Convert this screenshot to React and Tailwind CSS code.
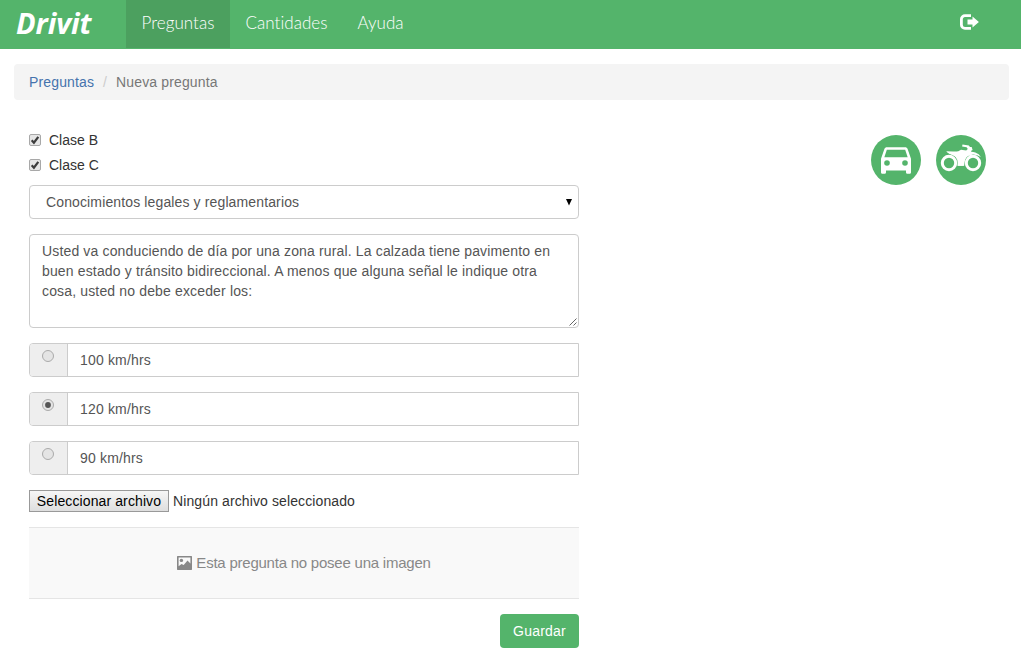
const arial = "font-['Liberation_Sans',Arial,sans-serif]";

function LogoutIcon() {
  return (
    <svg className="block h-[18px] w-5" viewBox="0 0 20 18" fill="none" aria-label="Salir">
      <path d="M12 2.600H6a3.600 3.600 0 0 0-3.600 3.600v5.600a3.600 3.600 0 0 0 3.600 3.600h6" stroke="#fff" strokeWidth="2.800" />
      <path d="M8.500 6.500h5V3.400L19.900 9l-6.400 5.600v-3.100h-5z" fill="#fff" />
    </svg>
  );
}

function CarIcon() {
  return (
    <svg className="size-[50px]" viewBox="0 0 50 50">
      <circle cx="25" cy="25" r="25" fill="#54b46b" />
      <path
        transform="translate(5 3.800) scale(1.667)"
        fill="#fff"
        d="M18.92 6.01C18.72 5.42 18.16 5 17.5 5h-11c-.66 0-1.21.42-1.42 1.01L3 12v8c0 .55.45 1 1 1h1c.55 0 1-.45 1-1v-1h12v1c0 .55.45 1 1 1h1c.55 0 1-.45 1-1v-8l-2.08-5.99zM5 11l1.500-4.500h11L19 11H5z"
        fillRule="evenodd"
      />
      <circle cx="16" cy="28" r="2.800" fill="#54b46b" />
      <circle cx="34" cy="28" r="2.800" fill="#54b46b" />
    </svg>
  );
}

function MotorcycleIcon() {
  return (
    <svg className="size-[50px]" viewBox="0 0 50 50">
      <circle cx="25" cy="25" r="25" fill="#54b46b" />
      <path
        d="M10.300 16.600 20.500 17.200l4.500-2.400 5.200.8 1.600-1.700-1.200-1.700-4.500-.7.400-2 6.300 1 1.200 1.600 1.700-.2.900 3.200-1.700.9 1.700 3.500L30 26l-1.800 4.800h-7l-1.500-8.300-5.200-3z"
        fill="#fff"
      />
      <g fill="#54b46b">
        <circle cx="13" cy="28" r="8.800" />
        <circle cx="37" cy="28" r="8.800" />
      </g>
      <path d="M10.300 16.600h12v5l-2.500.3c-1.500-2-4-3.200-6.800-3.300z" fill="#fff" />
      <path d="M20.500 19.500 31 17.500l-2.500 9.500-.8 3.800H22l-.3-5.800z" fill="#fff" />
      <path d="M32.500 15.500 37 26" stroke="#fff" strokeWidth="2" />
      <path d="M29 18q5.500-2 10.300-.6 3.900 1.300 5.600 4.700-4-2.800-8-2.600-5.300.2-8.400 5.100z" fill="#fff" />
      <g fill="#54b46b" stroke="#fff" strokeWidth="3">
        <circle cx="13" cy="28" r="6.700" />
        <circle cx="37" cy="28" r="6.700" />
      </g>
    </svg>
  );
}

function PictureIcon() {
  return (
    <svg className="mb-px h-[14px] w-[15px]" viewBox="0 0 15 14">
      <path
        fill="#888"
        fillRule="evenodd"
        d="M.5 0h14l.5.500v13l-.5.500H.5L0 13.500V.5zM1.600 1.600v8.600L4.500 7.900l2.200 1.200 3.800-4.600 2.900 3V1.600z"
      />
      <circle cx="4.400" cy="4.400" r="1.700" fill="#888" />
    </svg>
  );
}

function Checkbox({ label }) {
  return (
    <label className="flex h-5 items-center">
      <svg className="mr-2 size-3" viewBox="0 0 12 12">
        <rect x=".5" y=".5" width="11" height="11" rx="1.500" fill="#e6e6e6" stroke="#a8a8a8" />
        <path d="m2.700 6.300 2.200 2.400 4.400-5.900" fill="none" stroke="#3c3c3c" strokeWidth="2.200" />
      </svg>
      {label}
    </label>
  );
}

function Answer({ text, checked }) {
  return (
    <div className="mb-[15px] flex h-[34px] rounded-l border border-[#ccc] text-[#555]">
      <div className="flex w-[38px] justify-center rounded-l-[3px] border-r border-[#ccc] bg-[#eee] pt-[6px] pr-px">
        <svg className="size-3" viewBox="0 0 12 12">
          <circle cx="6" cy="6" r="5.500" fill="#e4e4e4" stroke="#aaa" />
          {checked && <circle cx="6" cy="6" r="2.900" fill="#555" />}
        </svg>
      </div>
      <div className="flex flex-1 items-center bg-white pl-3 tracking-[0.17px]">{text}</div>
    </div>
  );
}

export default function App() {
  return (
    <div className={`min-h-[670px] bg-white text-sm leading-5 text-[#333] ${arial}`}>
      <header className="flex h-[49px] items-start bg-[#54b46b] font-['Lato',sans-serif] text-[17px] text-white">
        <div className="flex h-[46px] w-[126px] items-center pl-4 font-['Open_Sans',sans-serif] text-[29px] font-bold tracking-[-0.1px] italic">
          Drivit
        </div>
        <nav className="flex h-[47px] font-light tracking-[0.04px] [font-variant-ligatures:none]">
          <a className="flex h-12 w-[104px] items-center justify-center bg-[#4ca05f] pb-[2px]">Preguntas</a>
          <a className="flex w-[113px] items-center justify-center pb-px">Cantidades</a>
          <a className="flex w-[75px] items-center justify-center pb-px">Ayuda</a>
        </nav>
        <button className="mt-[13px] mr-[42px] ml-auto">
          <LogoutIcon />
        </button>
      </header>

      <nav className="mt-[15px] mr-3 ml-[14px] flex h-9 items-center rounded bg-[#f4f4f4] pl-[15px] tracking-[0.14px]">
        <a className="text-[#4573ad]">Preguntas</a>
        <span className="w-[22px] text-center text-[#ccc]">/</span>
        <span className="text-[#777]">Nueva pregunta</span>
      </nav>

      <main className="flex items-start justify-between pt-[30px] pr-[35px] pl-[29px]">
        <form className="w-[550px]">
          <div className="mb-[10px] flex flex-col gap-[5px]">
            <Checkbox label="Clase B" />
            <Checkbox label="Clase C" />
          </div>

          <div className="mb-[15px] flex h-[34px] items-center justify-between rounded border border-[#ccc] pr-[6px] pl-4 tracking-[0.13px] text-[#555]">
            <span>Conocimientos legales y reglamentarios</span>
            <svg className="h-[7px] w-[6px]" viewBox="0 0 6 7">
              <path d="M0 0h6L3 6.500z" fill="#000" />
            </svg>
          </div>

          <div className="mb-[15px] flex h-[94px] items-end rounded border border-[#ccc] text-[#555]">
            <p className="h-full flex-1 pt-[6px] pl-3 tracking-[0.15px] whitespace-nowrap">
              Usted va conduciendo de día por una zona rural. La calzada tiene pavimento en
              <br />
              buen estado y tránsito bidireccional. A menos que alguna señal le indique otra
              <br />
              cosa, usted no debe exceder los:
            </p>
            <svg className="mb-px size-[9px]" viewBox="0 0 9 9">
              <path d="m.5 8.500 7-7M4.500 8.500l3-3" stroke="#666" fill="none" />
            </svg>
          </div>

          <Answer text="100 km/hrs" />
          <Answer text="120 km/hrs" checked />
          <Answer text="90 km/hrs" />

          <div className="mb-[15px] flex h-[22px] items-center tracking-[0.11px]">
            <button
              type="button"
              className="mr-1 h-[22px] w-[140px] border border-[#999] bg-linear-to-b from-[#f6f6f6] to-[#dedede] leading-5 whitespace-nowrap text-black"
            >
              Seleccionar archivo
            </button>
            <span>Ningún archivo seleccionado</span>
          </div>

          <div className="mb-[15px] flex h-[72px] items-center justify-center gap-1 border-y border-[#e5e5e5] bg-[#f9f9f9] text-[15px] tracking-[-0.23px] text-[#888]">
            <PictureIcon />
            <span>Esta pregunta no posee una imagen</span>
          </div>

          <button
            type="button"
            className="ml-auto block h-[34px] w-[79px] rounded bg-[#54b46b] tracking-[0.2px] text-white"
          >
            Guardar
          </button>
        </form>

        <div className="mt-[5px] flex gap-[15px]">
          <CarIcon />
          <MotorcycleIcon />
        </div>
      </main>
    </div>
  );
}
